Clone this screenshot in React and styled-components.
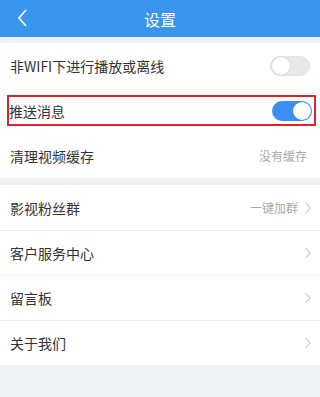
import React from 'react';
import styled, { createGlobalStyle } from 'styled-components';

const GlobalStyle = createGlobalStyle`
  html, body {
    margin: 0;
    padding: 0;
    background: #eff0f3;
    font-family: "Noto Sans CJK SC", "Noto Sans", sans-serif;
  }
`;

const Page = styled.div`
  width: 320px;
  min-height: 397px;
  background: #eff0f3;
`;

const Header = styled.div`
  height: 37px;
  background: #3a95ee;
  display: flex;
  align-items: center;
  justify-content: center;
  position: relative;
  color: #fff;
  font-size: 16px;
`;

const Back = styled.div`
  position: absolute;
  left: 16px;
  top: 7px;
  width: 14px;
  height: 22px;
`;

const Group = styled.div`
  background: #fff;
  margin-top: ${(p) => p.$gap}px;
`;

const Row = styled.div`
  height: 45px;
  display: flex;
  align-items: center;
  justify-content: space-between;
  padding: 0 ${(p) => p.$right || 9}px 0 10px;
  box-sizing: border-box;
  border-top: ${(p) => (p.$line ? '1px solid #ededed' : 'none')};
  font-size: 14px;
  color: #333;
`;

const HighRow = styled(Row)`
  padding: 0;
`;

const Highlight = styled.div`
  height: 31px;
  width: 100%;
  margin: 0 4px 0 7px;
  border: 2px solid #d8262d;
  display: flex;
  align-items: center;
  justify-content: space-between;
  padding: 0 2px 0 0;
  box-sizing: border-box;
`;

const Extra = styled.span`
  display: flex;
  align-items: center;
  gap: 7px;
  font-size: 12px;
  color: #a8a8a8;
`;

const Switch = styled.div`
  width: 40px;
  height: 20px;
  border-radius: 10px;
  box-sizing: border-box;
  background: ${(p) => (p.$on ? '#3a8ff0' : '#e8e8e8')};
  border: ${(p) => (p.$on ? 'none' : '1px solid #e2e2e2')};
  display: flex;
  align-items: center;
  justify-content: ${(p) => (p.$on ? 'flex-end' : 'flex-start')};
  padding: 1px;
`;

const Knob = styled.div`
  width: 18px;
  height: 18px;
  border-radius: 50%;
  background: #fff;
  box-shadow: 0 0 1px rgba(0, 0, 0, 0.25);
`;

const Chevron = () => (
  <svg width="6" height="12" viewBox="0 0 6 12">
    <path d="M0.6 1l4.6 5-4.6 5" fill="none" stroke="#c4c4c4" strokeWidth="1.1" />
  </svg>
);

export default function App() {
  return (
    <Page>
      <GlobalStyle />
      <Header>
        <Back>
          <svg width="14" height="22" viewBox="0 0 14 22">
            <path d="M10 3L3 11l7 8" fill="none" stroke="#fff" strokeWidth="1.7" />
          </svg>
        </Back>
        设置
      </Header>
      <Group $gap={6}>
        <Row $right={10}>
          非WIFI下进行播放或离线
          <Switch>
            <Knob />
          </Switch>
        </Row>
        <HighRow>
          <Highlight>
            推送消息
            <Switch $on>
              <Knob />
            </Switch>
          </Highlight>
        </HighRow>
        <Row $right={13}>
          清理视频缓存
          <Extra>没有缓存</Extra>
        </Row>
      </Group>
      <Group $gap={7}>
        <Row>
          影视粉丝群
          <Extra>
            一键加群 <Chevron />
          </Extra>
        </Row>
        <Row $line>
          客户服务中心
          <Chevron />
        </Row>
        <Row $line>
          留言板
          <Chevron />
        </Row>
        <Row $line>
          关于我们
          <Chevron />
        </Row>
      </Group>
    </Page>
  );
}
